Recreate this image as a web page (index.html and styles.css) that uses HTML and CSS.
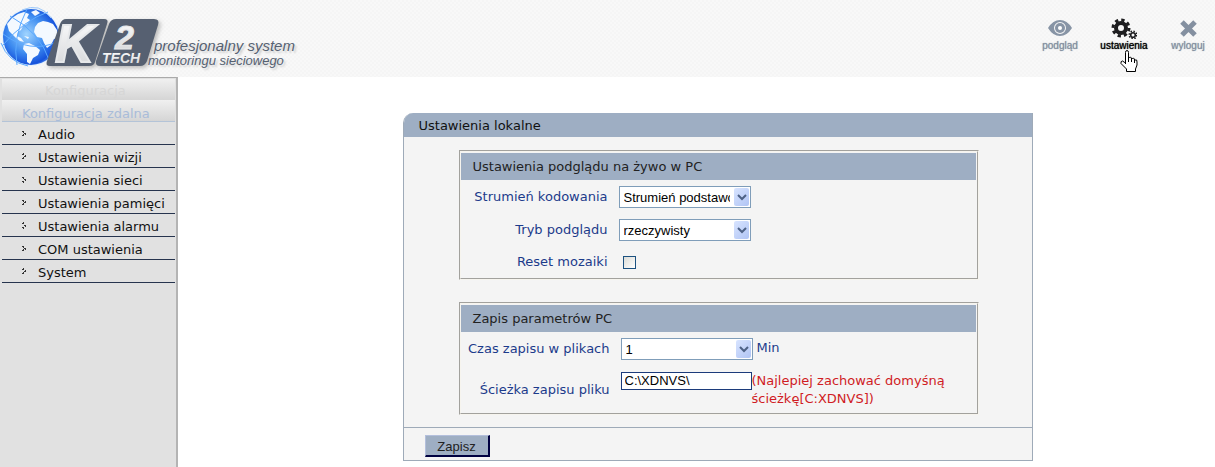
FILE: index.html
```html
<!DOCTYPE html>
<html lang="pl">
<head>
<meta charset="utf-8">
<title>K2 Tech - ustawienia lokalne</title>
<link rel="stylesheet" href="styles.css">
</head>
<body>
<header class="top">
  <div class="brand">
    <svg class="logo" width="160" height="72" viewBox="0 0 160 72" role="img" aria-label="K2 Tech">
      <defs>
        <radialGradient id="globe" cx="42%" cy="45%" r="60%">
          <stop offset="0" stop-color="#9fd4ff"/>
          <stop offset=".55" stop-color="#3f8df0"/>
          <stop offset=".9" stop-color="#1552dc"/>
          <stop offset="1" stop-color="#4b86ee"/>
        </radialGradient>
        <linearGradient id="silver" x1="0" y1="0" x2="0" y2="1">
          <stop offset="0" stop-color="#ffffff"/>
          <stop offset="1" stop-color="#d2d4d7"/>
        </linearGradient>
        <filter id="soft" x="-20%" y="-20%" width="150%" height="150%">
          <feDropShadow dx="2" dy="2" stdDeviation="2" flood-color="#777" flood-opacity=".5"/>
        </filter>
      </defs>
      <circle cx="31" cy="37" r="29" fill="#d8ecff" opacity=".6"/>
      <circle cx="31" cy="37" r="28" fill="url(#globe)"/>
      <g fill="#f3f9ff">
        <path d="M7 24L12 18L18 14L24 12L29 14L27 18L30 20L27 24L23 26L21 30L18 32L17 36L21 38L24 42L20 41L16 38L12 34L9 31Z"/>
        <path d="M24 44L29 43L35 46L40 50L38 55L33 58L30 64L27 62L27 54L23 49Z"/>
        <path d="M35 27L38 23L43 21L48 22L53 24L57 30L58 38L54 39L51 45L47 48L44 43L42 38L37 37L34 32Z"/>
        <path d="M31 12L36 10L40 13L35 16Z"/>
        <path d="M24 36L29 37L28 39Z"/>
      </g>
      <g fill="none" stroke="#5ba9ff" stroke-width="1">
        <path d="M2 46Q24 20 48 12M10 16Q40 32 50 62M3 34Q30 54 57 42M17 65Q12 38 27 9M1 43Q8 62 28 66"/>
        <path d="M22 10Q40 2 51 18" stroke="#9bc7fa"/>
      </g>
      <g filter="url(#soft)" fill="#566171">
        <path d="M66 19H104Q109 19 107 24L95 62Q94 66 89 66H50Q45 66 47 61L60 24Q62 19 66 19Z"/>
        <path d="M116 19H154Q160 19 158 25L147 61Q145 66 140 66H100Q95 66 96 61L109 24Q111 19 116 19Z"/>
      </g>
      <g fill="url(#silver)" stroke="#e6e8ea" font-family="Liberation Sans, sans-serif" font-weight="bold" font-style="italic">
        <text x="55" y="62" font-size="54" stroke-width="2">K</text>
        <text x="115" y="49" font-size="34" stroke-width="1">2</text>
        <text x="102" y="63" font-size="14" stroke="none">TECH</text>
      </g>
    </svg>
    <p class="tagline"><span>profesjonalny system</span><span class="second">monitoringu sieciowego</span></p>
  </div>
  <nav class="tools">
    <a class="tool" href="#podglad">
      <svg width="26" height="22" viewBox="0 0 26 22" aria-hidden="true">
        <path fill="#8794a5" fill-rule="evenodd" d="M1 11Q6 3 13 3T25 11Q20 19 13 19T1 11ZM13 5a6 6 0 1 0 0 12a6 6 0 1 0 0-12Z"/>
        <circle cx="13" cy="11" r="5" fill="#8794a5"/><circle cx="13" cy="11" r="2" fill="#fff"/>
      </svg>
      <span>podgląd</span>
    </a>
    <a class="tool active" href="#ustawienia">
      <svg width="26" height="22" viewBox="0 0 26 22" aria-hidden="true">
        <g fill="none" stroke="#1d1d1f">
          <circle cx="10" cy="11" r="5" stroke-width="4"/>
          <circle cx="10" cy="11" r="8" stroke-width="3" stroke-dasharray="3.3 2.983"/>
          <circle cx="22" cy="18" r="2.3" stroke-width="1.6"/>
          <circle cx="22" cy="18" r="3.8" stroke-width="1.5" stroke-dasharray="1.5 1.485"/>
        </g>
      </svg>
      <span>ustawienia</span>
      <svg class="pointer" width="18" height="23" viewBox="0 0 18 23" aria-hidden="true">
        <path fill="#fff" stroke="#000" d="M5.500 13V2.500Q5.500 .5 7 .5T8.500 2.500V8Q11.500 6 11.500 9Q14.500 7 14.500 10Q17.500 9 17 12V15L15.500 19V21.500H6.500V19L1 13.500Q.5 11 2.500 11Z"/>
        <path fill="none" stroke="#000" d="M5.500 11V14M8.500 7V12M11.500 8V12M14.500 9.500V13"/>
      </svg>
    </a>
    <a class="tool" href="#wyloguj">
      <svg width="26" height="22" viewBox="0 0 26 22" aria-hidden="true">
        <path d="M7 5L20 18M20 5L7 18" stroke="#8490a0" stroke-width="5" fill="none"/>
      </svg>
      <span>wyloguj</span>
    </a>
  </nav>
</header>
<div class="page">
  <aside class="side">
    <div class="bar faded">Konfiguracja</div>
    <div class="bar current">Konfiguracja zdalna</div>
    <nav class="menu">
      <a href="#audio">Audio</a>
      <a href="#wizja">Ustawienia wizji</a>
      <a href="#siec">Ustawienia sieci</a>
      <a href="#pamiec">Ustawienia pamięci</a>
      <a href="#alarm">Ustawienia alarmu</a>
      <a href="#com">COM ustawienia</a>
      <a href="#system">System</a>
    </nav>
  </aside>
  <main class="main">
    <form class="panel">
      <h1 class="title">Ustawienia lokalne</h1>
      <div class="body">
        <section class="group">
          <h2 class="heading">Ustawienia podglądu na żywo w PC</h2>
          <div class="rows live">
            <label for="stream">Strumień kodowania</label>
            <div class="field"><span class="combo"><select id="stream"><option>Strumień podstawowy</option></select><svg class="arrow" viewBox="0 0 15 18" aria-hidden="true"><path d="M4 7L8 11L12 7"/></svg></span></div>
            <label for="mode">Tryb podglądu</label>
            <div class="field"><span class="combo"><select id="mode"><option>rzeczywisty</option></select><svg class="arrow" viewBox="0 0 15 18" aria-hidden="true"><path d="M4 7L8 11L12 7"/></svg></span></div>
            <label for="mosaic">Reset mozaiki</label>
            <div class="field"><input class="check" type="checkbox" id="mosaic"></div>
          </div>
        </section>
        <section class="group">
          <h2 class="heading">Zapis parametrów PC</h2>
          <div class="rows record">
            <label for="time">Czas zapisu w plikach</label>
            <div class="field"><span class="combo"><select id="time"><option>1</option></select><svg class="arrow" viewBox="0 0 15 18" aria-hidden="true"><path d="M4 7L8 11L12 7"/></svg></span><span class="unit">Min</span></div>
            <label for="path">Ścieżka zapisu pliku</label>
            <div class="field path"><input class="text" type="text" id="path" value="C:\XDNVS\"><span class="hint">(Najlepiej zachować domyśną ścieżkę[C:XDNVS])</span></div>
          </div>
        </section>
      </div>
      <div class="actions"><button class="save" type="button">Zapisz</button></div>
    </form>
  </main>
</div>
</body>
</html>
```
FILE: styles.css
```css
* { box-sizing: border-box; }
body {
  margin: 0;
  min-height: 100vh;
  display: flex;
  flex-direction: column;
  background: #fff;
  font: 13px/18px "DejaVu Sans", Verdana, sans-serif;
  color: #111;
}
a { color: inherit; text-decoration: none; }
h1, h2, p { margin: 0; font-size: 13px; font-weight: normal; }

.top {
  display: flex;
  justify-content: space-between;
  min-height: 77px;
  background: repeating-conic-gradient(#f5f5f5 0 25%, #f8f8f8 0 50%) 0 0 / 4px 4px;
}
.brand { display: flex; }
.logo { display: block; overflow: visible; }
.tagline {
  display: flex;
  flex-direction: column;
  padding-top: 38px;
  margin-left: -6px;
  font: italic 15px/15px "Liberation Sans", Arial, sans-serif;
  color: #566171;
  text-shadow: 2px 2px 2px #ccc;
}
.tagline .second { margin-left: -6px; font-size: 13px; }
.tools { display: flex; padding: 17px 0 0; }
.tool {
  position: relative;
  width: 64px;
  display: flex;
  flex-direction: column;
  align-items: center;
  font: 10px/12px "Liberation Sans", Arial, sans-serif;
  color: #8390a0;
}
.tool:last-child { margin-right: -5px; }
.tool.active { color: #000; }
.tool > span { padding-top: 1px; text-shadow: 0 0 1px currentColor; }
.pointer { position: absolute; left: 28px; top: 33px; }

.page { flex: 1; display: flex; }
.side {
  width: 178px;
  flex: none;
  padding: 1px 1px 0 2px;
  background: #e1e1e1;
  border-top: 1px solid #aaa;
  border-right: 2px solid #b4b4b4;
}
.bar {
  height: 22px;
  padding-top: 5px;
  background: linear-gradient(#f0f0f0, #d5d5d5);
}
.bar.faded { height: 21px; padding-left: 43px; padding-top: 3px; color: #d6d6d6; }
.bar.current {
  padding-left: 20px;
  color: #a9bcd9;
  border-bottom: 1px solid #b4c4d8;
}
.menu a {
  display: flex;
  align-items: center;
  height: 23px;
  padding: 4px 0 0 36px;
  border-bottom: 1px solid #26344e;
  background: radial-gradient(circle, #333 1px, transparent 1px) 20px 8px / 3px 3px no-repeat,
    radial-gradient(circle, #333 1px, transparent 1px) 22px 10px / 3px 3px no-repeat,
    radial-gradient(circle, #333 1px, transparent 1px) 20px 12px / 3px 3px no-repeat;
}

.main { flex: 1; padding: 36px 0 6px 42px; }
.panel {
  width: 630px;
  margin: 0 auto;
  border: 1px solid #9eaab8;
  border-top: 0;
  border-radius: 10px 0 0 0;
  background: #f4f4f4;
  overflow: hidden;
}
.title { padding: 4px 15px 2px; background: #9eaec3; color: #111; }
.body {
  display: flex;
  flex-direction: column;
  gap: 22px;
  padding: 13px 53px 12px 55px;
}
.group { border: 2px groove #f6f4ee; padding: 1px 1px 0 0; }
.heading { padding: 5px 12px 4px; background: #9eaec3; color: #222; }
.rows {
  display: grid;
  align-items: center;
  color: #1c3b8b;
}
.rows label { text-align: right; }
.live { grid-template: 34px 32px 32px / 147px 1fr; column-gap: 11px; }
.record { grid-template: 34px 47px / 149px 1fr; column-gap: 11px; }
.field { display: flex; align-items: center; }
.combo { position: relative; display: block; width: 132px; height: 22px; }
.combo select {
  appearance: none;
  width: 100%;
  height: 100%;
  padding: 0 20px 0 4px;
  border: 1px solid #7f9db9;
  border-radius: 0;
  background: #fff;
  font: 13px "Liberation Sans", Arial, sans-serif;
  color: #000;
}
.arrow {
  position: absolute;
  top: 2px;
  right: 2px;
  width: 15px;
  height: 18px;
  background: linear-gradient(135deg, #d8e4ff, #b0c4f4);
  border-radius: 2px;
  fill: none;
  stroke: #4d6185;
  stroke-width: 2;
  pointer-events: none;
}
.check {
  appearance: none;
  width: 13px;
  height: 13px;
  margin: 0 4px;
  border: 1px solid #1c5180;
  background: linear-gradient(135deg, #dcdcd7, #fff);
}
.unit { padding: 0 0 2px 4px; }
.path { align-items: flex-start; }
.text {
  width: 131px;
  height: 18px;
  flex: none;
  padding: 0 3px;
  border: 1px solid #1c3b7b;
  background: #fff;
  font: 13px "Liberation Sans", Arial, sans-serif;
  color: #000;
}
.hint { color: #d01c24; }
.actions { padding: 7px 21px 3px; border-top: 1px solid #9eaab8; }
.save {
  display: block;
  width: 65px;
  height: 22px;
  padding: 2px 0 0;
  border: solid;
  border-width: 1px 2px 2px 1px;
  border-color: #b3bfdc #000040 #000040 #b3bfdc;
  background: #9eaec3;
  font: 13px "Liberation Sans", Arial, sans-serif;
  color: #222;
}
```
